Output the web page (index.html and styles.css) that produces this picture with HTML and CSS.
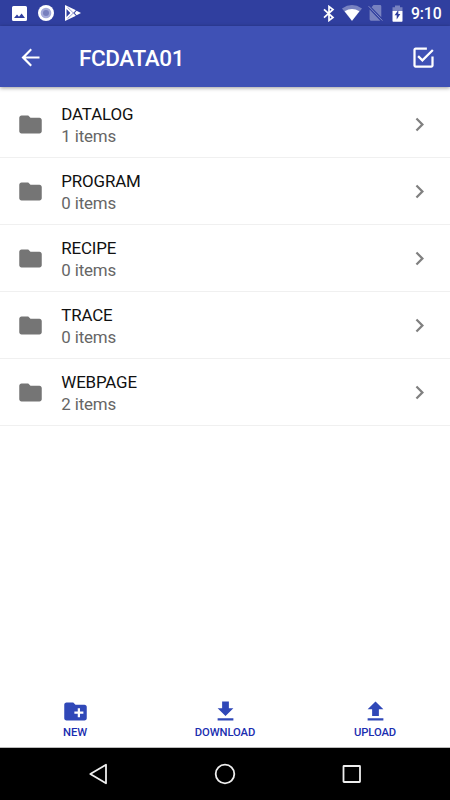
FILE: index.html
```html
<!DOCTYPE html>
<html lang="en">
<head>
    <meta charset="UTF-8">
    <meta name="viewport" content="width=device-width, initial-scale=1.0">
    <title>FCDATA01</title>
    <link rel="stylesheet" href="styles.css">
</head>
<body>
    <div class="status-bar">
        <div class="notifications">
            <svg width="15" height="15" viewBox="0 0 15 15"><path fill="#fff" fill-rule="evenodd" d="M1.500 0h12Q15 0 15 1.500v12Q15 15 13.500 15h-12Q0 15 0 13.500v-12Q0 0 1.500 0zM2 12h11L9.600 7.500 7 10.700 5 8.500z"/></svg>
            <svg width="16" height="16" viewBox="0 0 16 16"><circle cx="8" cy="8" r="8" fill="#fff"/><circle cx="8" cy="8" r="5.300" fill="#a5abda"/><circle cx="8" cy="8" r="3" fill="#7880be"/></svg>
            <svg width="16" height="16" viewBox="0 0 16 16"><path fill="#fff" d="M0 0 11 5.300 8.700 8 11 10.700 0 16z"/><path fill="#303f9f" d="M1.500 4v8L5.300 8z"/><path fill="#fff" d="M11.600 5.800 16 8l-4.400 2.200L9.600 8z"/><path fill="none" stroke="#303f9f" stroke-width=".5" d="M2.500 2.300 11.300 10.800M2.500 13.700 11.300 5.200"/></svg>
        </div>
        <div class="indicators">
            <svg class="bluetooth" width="12" height="17" viewBox="0 0 12 17"><path fill="none" stroke="#fff" stroke-width="1.700" d="M1 4.300 10 12.500 6 15.500V1.500L10 4.500 1 12.700"/></svg>
            <svg class="wifi" width="20" height="16" viewBox="0 0 20 16"><path fill="#fff" fill-opacity=".35" d="M0 3.500Q10-3.300 20 3.500L10 16z"/><path fill="#fff" d="M2.600 6.300Q10 1.500 17.400 6.300L10 15.800z"/></svg>
            <svg class="sim" width="15" height="16" viewBox="0 0 15 16"><path fill="#fff" fill-opacity=".35" d="M5.500 0H12q1.300 0 1.300 1.300v11L3.600 2.200zM1.600 4.400 12.300 15.700H3q-1.400 0-1.400-1.400z"/><path stroke="#fff" stroke-opacity=".4" stroke-width="1" d="M.6 1.200 14.400 15.600"/></svg>
            <svg class="battery" width="11" height="17" viewBox="0 0 11 17"><path fill="#fff" fill-opacity=".35" d="M3 .5h5v1.800h2.500V6H.5V2.300H3z"/><path fill="#fff" d="M.5 6h10v10q0 .7-.7.700H1.200q-.7 0-.7-.7z"/><path fill="#303f9f" d="M6.300 5v4h2L4.700 14.500v-4.200H2.600z"/></svg>
            <span class="clock">9:10</span>
        </div>
    </div>

    <header class="app-bar">
        <svg width="27" height="27" viewBox="0 0 24 24"><path fill="#fff" d="M20 11.100H7.700l5.600-5.700L12 4.100 4 12l8 7.900 1.300-1.300-5.600-5.700H20z"/></svg>
        <h1>FCDATA01</h1>
        <svg class="select-all" width="27" height="27" viewBox="0 0 24 24"><path fill="#fff" d="M19 19H5V5h10V3H5c-1.110 0-2 .9-2 2v14c0 1.100.89 2 2 2h14c1.100 0 2-.9 2-2v-8h-2zM7.910 10.080 6.500 11.500 11 16 21 6l-1.410-1.420L11 13.170z"/></svg>
    </header>

    <ul class="folders">
        <li>
            <svg class="folder" viewBox="0 0 24 24"><path d="M10 4H4c-1.100 0-2 .9-2 2v12c0 1.100.9 2 2 2h16c1.100 0 2-.9 2-2V8c0-1.100-.9-2-2-2h-8z"/></svg>
            <div class="info"><h2>DATALOG</h2><p>1 items</p></div>
            <svg class="chevron" viewBox="0 0 24 24"><path d="M10 6 8.590 7.410 13.170 12l-4.580 4.590L10 18l6-6z"/></svg>
        </li>
        <li>
            <svg class="folder" viewBox="0 0 24 24"><path d="M10 4H4c-1.100 0-2 .9-2 2v12c0 1.100.9 2 2 2h16c1.100 0 2-.9 2-2V8c0-1.100-.9-2-2-2h-8z"/></svg>
            <div class="info"><h2>PROGRAM</h2><p>0 items</p></div>
            <svg class="chevron" viewBox="0 0 24 24"><path d="M10 6 8.590 7.410 13.170 12l-4.580 4.590L10 18l6-6z"/></svg>
        </li>
        <li>
            <svg class="folder" viewBox="0 0 24 24"><path d="M10 4H4c-1.100 0-2 .9-2 2v12c0 1.100.9 2 2 2h16c1.100 0 2-.9 2-2V8c0-1.100-.9-2-2-2h-8z"/></svg>
            <div class="info"><h2>RECIPE</h2><p>0 items</p></div>
            <svg class="chevron" viewBox="0 0 24 24"><path d="M10 6 8.590 7.410 13.170 12l-4.580 4.590L10 18l6-6z"/></svg>
        </li>
        <li>
            <svg class="folder" viewBox="0 0 24 24"><path d="M10 4H4c-1.100 0-2 .9-2 2v12c0 1.100.9 2 2 2h16c1.100 0 2-.9 2-2V8c0-1.100-.9-2-2-2h-8z"/></svg>
            <div class="info"><h2>TRACE</h2><p>0 items</p></div>
            <svg class="chevron" viewBox="0 0 24 24"><path d="M10 6 8.590 7.410 13.170 12l-4.580 4.590L10 18l6-6z"/></svg>
        </li>
        <li>
            <svg class="folder" viewBox="0 0 24 24"><path d="M10 4H4c-1.100 0-2 .9-2 2v12c0 1.100.9 2 2 2h16c1.100 0 2-.9 2-2V8c0-1.100-.9-2-2-2h-8z"/></svg>
            <div class="info"><h2>WEBPAGE</h2><p>2 items</p></div>
            <svg class="chevron" viewBox="0 0 24 24"><path d="M10 6 8.590 7.410 13.170 12l-4.580 4.590L10 18l6-6z"/></svg>
        </li>
    </ul>

    <div class="actions">
        <div class="action">
            <svg viewBox="0 0 24 24"><path d="M20 6h-8l-2-2H4c-1.110 0-1.990.89-1.990 2L2 18c0 1.110.89 2 2 2h16c1.110 0 2-.89 2-2V8c0-1.110-.89-2-2-2zm-1 8h-3v3h-2v-3h-3v-2h3V9h2v3h3z"/></svg>
            <span>NEW</span>
        </div>
        <div class="action">
            <svg viewBox="0 0 24 24"><path d="M19 9h-4V3H9v6H5l7 7zM5 18v2h14v-2z"/></svg>
            <span>DOWNLOAD</span>
        </div>
        <div class="action">
            <svg viewBox="0 0 24 24"><path d="M9 16h6v-6h4l-7-7-7 7h4zm-4 2h14v2H5z"/></svg>
            <span>UPLOAD</span>
        </div>
    </div>

    <nav class="nav-bar">
        <svg width="22" height="22" viewBox="0 0 22 22"><path d="M19 1.700v18.600L3.300 11z"/></svg>
        <svg width="22" height="22" viewBox="0 0 22 22"><circle cx="11" cy="11" r="9.300"/></svg>
        <svg width="22" height="22" viewBox="0 0 22 22"><rect x="2.500" y="3" width="16.500" height="16" rx=".5"/></svg>
    </nav>
</body>
</html>
```
FILE: styles.css
```css
* {
    box-sizing: border-box;
}
body {
    margin: 0;
    height: 800px;
    display: flex;
    flex-direction: column;
    overflow: hidden;
    font-family: Roboto, "Liberation Sans", sans-serif;
    background-color: #fff;
}
svg {
    display: block;
    flex: none;
}
h1, h2, p, ul {
    margin: 0;
    padding: 0;
}
.status-bar {
    height: 26px;
    flex: none;
    display: flex;
    justify-content: space-between;
    align-items: center;
    padding: 0 8.5px 0 12px;
    background-color: #303f9f;
}
.notifications, .indicators {
    display: flex;
    align-items: center;
}
.notifications {
    gap: 11px;
}
.wifi {
    margin-left: 7px;
}
.sim {
    margin-left: 6px;
}
.battery {
    margin-left: 9px;
}
.clock {
    margin-left: 7.5px;
    padding-top: 2px;
    font-size: 15.75px;
    font-weight: 500;
    line-height: 20px;
    letter-spacing: -0.1px;
    color: #fff;
}
.app-bar {
    height: 61px;
    flex: none;
    display: flex;
    align-items: center;
    padding: 1px 13px 0 17px;
    background-color: #3f51b5;
    box-shadow: 0 1px 4px rgba(0, 0, 0, 0.4);
    z-index: 1;
}
.app-bar h1 {
    margin-left: 35px;
    padding-top: 1px;
    font-size: 22.5px;
    font-weight: 500;
    line-height: 30px;
    letter-spacing: -0.4px;
    color: #fff;
}
.select-all {
    margin-left: auto;
}
.folders {
    flex: 1;
    padding-top: 4.6px;
    list-style: none;
}
.folders li {
    height: 66.9px;
    display: flex;
    align-items: center;
    padding: 0 17px;
    border-bottom: 1px solid #f0f0f0;
}
.folder {
    width: 27px;
    height: 27px;
    fill: #757575;
}
.chevron {
    width: 27px;
    height: 27px;
    margin-left: auto;
    fill: #808080;
}
.info {
    margin-left: 17.3px;
    padding-top: 1.5px;
    font-size: 16.9px;
    line-height: 22.3px;
    letter-spacing: -0.15px;
}
.info h2 {
    font-size: inherit;
    font-weight: 400;
    color: #111;
}
.info p {
    color: #666;
}
.actions {
    height: 63px;
    flex: none;
    display: grid;
    grid-template-columns: repeat(3, 1fr);
    padding-top: 12.5px;
    border-bottom: 1px solid #bbb;
}
.action {
    display: flex;
    flex-direction: column;
    align-items: center;
    font-size: 11.25px;
    font-weight: 500;
    line-height: 15px;
    letter-spacing: -0.1px;
    color: #1a2eb0;
}
.action svg {
    width: 27px;
    height: 27px;
    fill: #3048b8;
}
.nav-bar {
    height: 52px;
    flex: none;
    display: flex;
    justify-content: center;
    align-items: center;
    gap: 105px;
    background-color: #000;
}
.nav-bar svg {
    fill: none;
    stroke: #eee;
    stroke-width: 1.8;
    stroke-linejoin: round;
}
```
